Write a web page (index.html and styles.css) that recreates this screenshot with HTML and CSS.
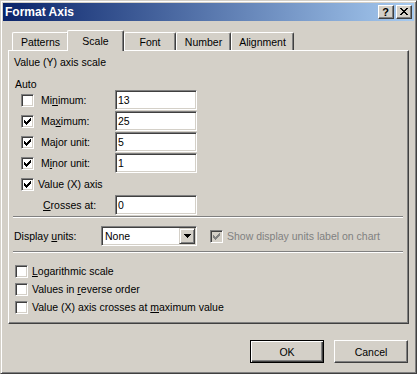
FILE: index.html
```html
<!DOCTYPE html>
<html>
<head>
<meta charset="utf-8">
<title>Format Axis</title>
<link rel="stylesheet" href="styles.css">
</head>
<body>
<div class="window">
  <div class="titlebar">
    <span class="title">Format Axis</span>
    <div class="tb-buttons">
      <span class="tb-btn help">?</span>
      <span class="tb-btn close"><svg width="8" height="7" viewBox="0 0 8 7" shape-rendering="crispEdges"><path d="M0 0h2v1h1v1h2v-1h1v-1h2v1h-1v1h-1v1h-1v1h1v1h1v1h1v1h-2v-1h-1v-1h-2v1h-1v1h-2v-1h1v-1h1v-1h1v-1h-1v-1h-1v-1h-1z"/></svg></span>
    </div>
  </div>

  <div class="tabs">
    <div class="tab tab-first">Patterns</div>
    <div class="tab tab-selected">Scale</div>
    <div class="tab tab-font">Font</div>
    <div class="tab tab-number">Number</div>
    <div class="tab tab-align">Alignment</div>
  </div>

  <div class="panel">
    <div class="group-title">Value (Y) axis scale</div>
    <div class="auto">Auto</div>

    <div class="row">
      <span class="cb"></span>
      <span class="lbl">Mi<u>n</u>imum:</span>
      <span class="field">13</span>
    </div>
    <div class="row">
      <span class="cb"><svg width="9" height="9" viewBox="0 0 9 9" shape-rendering="crispEdges"><path d="M1 3h1v1h1v1h1v-1h1v-1h1v-1h1v-1h1v3h-1v1h-1v1h-1v1h-1v1h-1v-1h-1v-1h-1z"/></svg></span>
      <span class="lbl">Ma<u>x</u>imum:</span>
      <span class="field">25</span>
    </div>
    <div class="row">
      <span class="cb"><svg width="9" height="9" viewBox="0 0 9 9" shape-rendering="crispEdges"><path d="M1 3h1v1h1v1h1v-1h1v-1h1v-1h1v-1h1v3h-1v1h-1v1h-1v1h-1v1h-1v-1h-1v-1h-1z"/></svg></span>
      <span class="lbl">Ma<u>j</u>or unit:</span>
      <span class="field">5</span>
    </div>
    <div class="row">
      <span class="cb"><svg width="9" height="9" viewBox="0 0 9 9" shape-rendering="crispEdges"><path d="M1 3h1v1h1v1h1v-1h1v-1h1v-1h1v-1h1v3h-1v1h-1v1h-1v1h-1v1h-1v-1h-1v-1h-1z"/></svg></span>
      <span class="lbl">M<u>i</u>nor unit:</span>
      <span class="field">1</span>
    </div>
    <div class="row">
      <span class="cb"><svg width="9" height="9" viewBox="0 0 9 9" shape-rendering="crispEdges"><path d="M1 3h1v1h1v1h1v-1h1v-1h1v-1h1v-1h1v3h-1v1h-1v1h-1v1h-1v1h-1v-1h-1v-1h-1z"/></svg></span>
      <span class="lbl-x">Value (X) axis</span>
    </div>
    <div class="row">
      <span class="lbl-cross"><u>C</u>rosses at:</span>
      <span class="field">0</span>
    </div>

    <div class="sep"></div>

    <div class="units-row">
      <span class="lbl-units">Display <u>u</u>nits:</span>
      <span class="combo">
        <span class="combo-text">None</span>
        <span class="combo-btn"><svg width="7" height="4" viewBox="0 0 7 4" shape-rendering="crispEdges"><path d="M0 0h7v1h-1v1h-1v1h-1v1h-1v-1h-1v-1h-1v-1h-1z"/></svg></span>
      </span>
      <span class="cb cb-disabled"><svg width="9" height="9" viewBox="0 0 9 9" shape-rendering="crispEdges"><path d="M1 3h1v1h1v1h1v-1h1v-1h1v-1h1v-1h1v3h-1v1h-1v1h-1v1h-1v1h-1v-1h-1v-1h-1z"/></svg></span>
      <span class="lbl-disabled">Show display units label on chart</span>
    </div>

    <div class="sep sep2"></div>

    <div class="opts">
      <div class="opt"><span class="cb"></span><span class="opt-lbl"><u>L</u>ogarithmic scale</span></div>
      <div class="opt"><span class="cb"></span><span class="opt-lbl">Values in <u>r</u>everse order</span></div>
      <div class="opt"><span class="cb"></span><span class="opt-lbl">Value (X) axis crosses at <u>m</u>aximum value</span></div>
    </div>
  </div>

  <div class="buttons">
    <span class="btn btn-default">OK</span>
    <span class="btn">Cancel</span>
  </div>
</div>
</body>
</html>
```

FILE: styles.css
```css
* { box-sizing: border-box; }

html, body {
  margin: 0;
  padding: 0;
}

body {
  background: #D4D0C8;
  font-family: "Liberation Sans", Arial, sans-serif;
  font-size: 10.5px;
  color: #000;
}

.window {
  width: 417px;
  height: 374px;
  background: #D4D0C8;
  border: 1px solid;
  border-color: #D4D0C8 #404040 #404040 #D4D0C8;
  box-shadow: inset 1px 1px #fff, inset -1px -1px #808080;
  padding: 2px;
  display: flex;
  flex-direction: column;
}

/* Title bar */
.titlebar {
  height: 18px;
  flex: none;
  background: linear-gradient(to right, #0A246A, #A6CAF0);
  display: flex;
  align-items: center;
  justify-content: space-between;
  padding: 0 2px 0 2px;
}

.title {
  color: #fff;
  font-weight: bold;
  font-size: 12px;
  line-height: 18px;
}

.tb-buttons {
  display: flex;
  gap: 2px;
}

.tb-btn {
  width: 16px;
  height: 14px;
  background: #D4D0C8;
  border: 1px solid;
  border-color: #fff #404040 #404040 #fff;
  box-shadow: inset -1px -1px #808080;
  display: flex;
  align-items: center;
  justify-content: center;
}

.help {
  font-weight: bold;
  font-size: 11px;
  line-height: 12px;
  padding-right: 1px;
}

.close svg {
  display: block;
  margin-right: 1px;
  margin-bottom: 1px;
}

/* Tabs */
.tabs {
  flex: none;
  height: 20px;
  margin-top: 9px;
  padding-left: 9px;
  display: flex;
  align-items: flex-end;
  position: relative;
  z-index: 2;
}

.tab {
  height: 18px;
  border-left: 1px solid #fff;
  border-top: 1px solid #fff;
  border-right: 1px solid #404040;
  box-shadow: inset -1px 0 #808080;
  border-top-left-radius: 2px;
  border-top-right-radius: 2px;
  background: #D4D0C8;
  text-align: center;
  line-height: 13px;
  padding-top: 3px;
}

.tab-first { width: 57px; }
.tab-selected {
  width: 57px;
  height: 21px;
  margin-left: -2px;
  margin-bottom: -1px;
  padding-top: 4px;
  position: relative;
  z-index: 3;
}
.tab-font { width: 52px; }
.tab-number { width: 55px; }
.tab-align { width: 63px; }

/* Panel */
.panel {
  flex: none;
  height: 274px;
  margin: 0 5px;
  border: 1px solid;
  border-color: #fff #404040 #404040 #fff;
  box-shadow: inset -1px -1px #808080;
  padding-top: 5px;
  position: relative;
  z-index: 1;
}

.group-title {
  padding-left: 5px;
  line-height: 13px;
}

.auto {
  margin-top: 9px;
  padding-left: 6px;
  line-height: 12px;
}

.row {
  display: flex;
  align-items: center;
  height: 20px;
  margin-bottom: 1px;
}

.cb {
  flex: none;
  width: 13px;
  height: 13px;
  background: #fff;
  border: 1px solid;
  border-color: #808080 #fff #fff #808080;
  box-shadow: inset 1px 1px #404040, inset -1px -1px #D4D0C8;
}

.cb svg {
  display: block;
  margin: 1px;
}

.row .cb { margin-left: 12px; }

.lbl {
  width: 74px;
  margin-left: 7px;
}

.lbl-x { margin-left: 4px; }

.lbl-cross {
  width: 72px;
  margin-left: 34px;
}

.field {
  width: 82px;
  height: 20px;
  background: #fff;
  border: 1px solid;
  border-color: #808080 #fff #fff #808080;
  box-shadow: inset 1px 1px #404040, inset -1px -1px #D4D0C8;
  padding: 0 2px;
  line-height: 18px;
}

.sep {
  height: 2px;
  margin: 1px 5px 0 4px;
  border-top: 1px solid #808080;
  border-bottom: 1px solid #fff;
}

.sep2 { margin-top: 5px; }

.units-row {
  display: flex;
  align-items: center;
  height: 20px;
  margin-top: 8px;
}

.lbl-units {
  width: 92px;
  padding-left: 5px;
}

.combo {
  width: 96px;
  height: 20px;
  background: #fff;
  border: 1px solid;
  border-color: #808080 #fff #fff #808080;
  box-shadow: inset 1px 1px #404040, inset -1px -1px #D4D0C8;
  padding: 1px;
  display: flex;
  align-items: stretch;
}

.combo-text {
  flex: 1;
  padding-left: 2px;
  line-height: 16px;
}

.combo-btn {
  width: 16px;
  background: #D4D0C8;
  border: 1px solid;
  border-color: #D4D0C8 #404040 #404040 #D4D0C8;
  box-shadow: inset 1px 1px #fff, inset -1px -1px #808080;
  display: flex;
  align-items: center;
  justify-content: center;
}

.combo-btn svg { display: block; }

.cb-disabled {
  margin-left: 13px;
  background: #D4D0C8;
}

.cb-disabled svg path { fill: #808080; }

.lbl-disabled {
  margin-left: 4px;
  color: #808080;
}

.opts {
  margin-top: 9px;
}

.opt {
  display: flex;
  align-items: center;
  height: 18px;
}

.opt .cb { margin-left: 6px; }

.opt-lbl { margin-left: 4px; }

/* Buttons */
.buttons {
  flex: none;
  display: flex;
  justify-content: flex-end;
  gap: 10px;
  margin-top: 16px;
  padding-right: 6px;
}

.btn {
  width: 74px;
  height: 23px;
  border: 1px solid;
  border-color: #fff #404040 #404040 #fff;
  box-shadow: inset -1px -1px #808080;
  display: flex;
  align-items: center;
  justify-content: center;
}

.btn-default {
  border-color: #000;
  box-shadow: inset 1px 1px #fff, inset -1px -1px #404040, inset -2px -2px #808080;
}
```
